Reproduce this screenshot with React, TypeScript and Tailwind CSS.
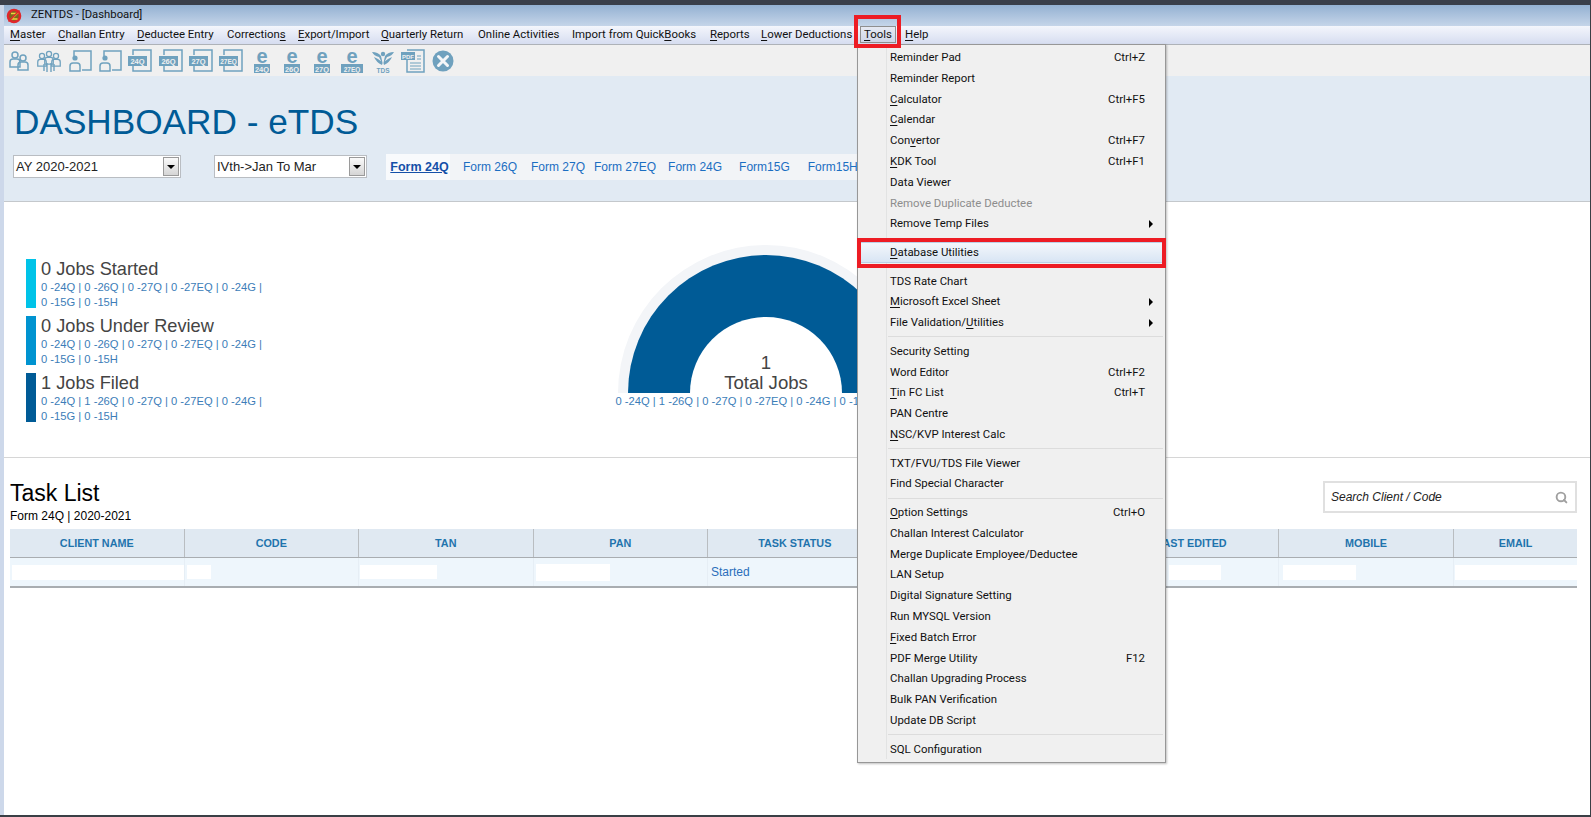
import React from 'react';
import { Search } from 'lucide-react';

const ICON = '#6fa1be';

const menuBar: { label: string; u: number; cls: string; active?: boolean }[] = [
  { label: 'Master', u: 0, cls: 'w-[48px]' },
  { label: 'Challan Entry', u: 0, cls: 'w-[79px]' },
  { label: 'Deductee Entry', u: 0, cls: 'w-[90px]' },
  { label: 'Corrections', u: 10, cls: 'w-[71px]' },
  { label: 'Export/Import', u: 0, cls: 'w-[83px]' },
  { label: 'Quarterly Return', u: 0, cls: 'w-[97px]' },
  { label: 'Online Activities', u: -1, cls: 'w-[94px]' },
  { label: 'Import from QuickBooks', u: 17, cls: 'w-[138px]' },
  { label: 'Reports', u: 0, cls: 'w-[51px]' },
  { label: 'Lower Deductions', u: 0, cls: 'w-[100px]' },
  { label: 'Tools', u: 0, cls: 'w-[44px]', active: true },
  { label: 'Help', u: 0, cls: 'w-[40px]' },
];

type MenuRow = { label: string; u?: number; key?: string; sub?: boolean; off?: boolean; hot?: boolean } | 'sep';

const toolsMenu: MenuRow[] = [
  { label: 'Reminder Pad', key: 'Ctrl+Z' },
  { label: 'Reminder Report' },
  { label: 'Calculator', u: 0, key: 'Ctrl+F5' },
  { label: 'Calendar', u: 0 },
  { label: 'Convertor', u: 3, key: 'Ctrl+F7' },
  { label: 'KDK Tool', u: 0, key: 'Ctrl+F1' },
  { label: 'Data Viewer' },
  { label: 'Remove Duplicate Deductee', off: true },
  { label: 'Remove Temp Files', sub: true },
  'sep',
  { label: 'Database Utilities', u: 0, hot: true },
  'sep',
  { label: 'TDS Rate Chart' },
  { label: 'Microsoft Excel Sheet', u: 0, sub: true },
  { label: 'File Validation/Utilities', u: 16, sub: true },
  'sep',
  { label: 'Security Setting' },
  { label: 'Word Editor', key: 'Ctrl+F2' },
  { label: 'Tin FC List', u: 0, key: 'Ctrl+T' },
  { label: 'PAN Centre' },
  { label: 'NSC/KVP Interest Calc', u: 0 },
  'sep',
  { label: 'TXT/FVU/TDS File Viewer' },
  { label: 'Find Special Character' },
  'sep',
  { label: 'Option Settings', u: 0, key: 'Ctrl+O' },
  { label: 'Challan Interest Calculator' },
  { label: 'Merge Duplicate Employee/Deductee' },
  { label: 'LAN Setup' },
  { label: 'Digital Signature Setting' },
  { label: 'Run MYSQL Version' },
  { label: 'Fixed Batch Error', u: 0 },
  { label: 'PDF Merge Utility', key: 'F12' },
  { label: 'Challan Upgrading Process' },
  { label: 'Bulk PAN Verification' },
  { label: 'Update DB Script' },
  'sep',
  { label: 'SQL Configuration' },
];

const tabs = [
  { label: 'Form 26Q', cls: 'ml-[13px]' },
  { label: 'Form 27Q', cls: 'ml-[14px]' },
  { label: 'Form 27EQ', cls: 'ml-[9px]' },
  { label: 'Form 24G', cls: 'ml-[12px]' },
  { label: 'Form15G', cls: 'ml-[17px]' },
  { label: 'Form15H', cls: 'ml-[18px]' },
];

const jobs = [
  { title: '0 Jobs Started', bar: 'bg-[#00c3e8]', first: '0 -24Q | 0 -26Q | 0 -27Q | 0 -27EQ | 0 -24G |' },
  { title: '0 Jobs Under Review', bar: 'bg-[#0093d0]', first: '0 -24Q | 0 -26Q | 0 -27Q | 0 -27EQ | 0 -24G |' },
  { title: '1 Jobs Filed', bar: 'bg-[#005b96]', first: '0 -24Q | 1 -26Q | 0 -27Q | 0 -27EQ | 0 -24G |' },
];

const columns = ['CLIENT NAME', 'CODE', 'TAN', 'PAN', 'TASK STATUS', '', 'LAST EDITED', 'MOBILE', 'EMAIL'];

const Mnemonic = ({ label, u }: { label: string; u?: number }) => {
  if (u === undefined || u < 0) return <>{label}</>;
  return (
    <>
      {label.slice(0, u)}
      <span className="underline underline-offset-2">{label[u]}</span>
      {label.slice(u + 1)}
    </>
  );
};

// toolbar drawings
const Person = ({ x, y, s = 1 }: { x: number; y: number; s?: number }) => (
  <g transform={`translate(${x} ${y}) scale(${s})`} fill="none" stroke={ICON} strokeWidth="1.5">
    <circle cx="0" cy="0" r="3" />
    <path d="M-5 12 v-5 q0 -3 3 -3 h4 q3 0 3 3 v5 z" />
  </g>
);

const Svg = ({ children }: { children: React.ReactNode }) => (
  <svg width="26" height="24" viewBox="0 0 26 24" className="shrink-0 overflow-visible">
    {children}
  </svg>
);

const TwoPeople = () => (
  <Svg>
    <Person x={9} y={6} />
    <Person x={17} y={9} />
  </Svg>
);

const Crowd = () => (
  <Svg>
    <Person x={6} y={7} s={0.85} />
    <Person x={20} y={7} s={0.85} />
    <Person x={13} y={5} s={0.85} />
    <path d="M8 22 V15 M11 23 V14 M15 23 V14 M18 22 V15" stroke={ICON} strokeWidth="1.4" />
  </Svg>
);

const PersonCard = () => (
  <Svg>
    <path d="M7 7 V2 H24 V21 H15" fill="none" stroke={ICON} strokeWidth="1.5" />
    <circle cx="8" cy="9" r="2.6" fill={ICON} />
    <path d="M3 22 v-5 q0 -3 3 -3 h4 q3 0 3 3 v5 z" fill="none" stroke={ICON} strokeWidth="1.5" />
  </Svg>
);

const FormIcon = ({ t }: { t: string }) => (
  <Svg>
    <path d="M6 6 V1 H24 V22 H6 V17" fill="none" stroke={ICON} strokeWidth="1.5" />
    <rect x="1" y="7" width="19" height="10" fill={ICON} />
    <text x="10.5" y="15" textAnchor="middle" fontSize={t.length > 3 ? 6.5 : 7.5} fontWeight="700" fill="#f0f0f0" fontFamily="'Liberation Sans', sans-serif">
      {t}
    </text>
  </Svg>
);

const EFormIcon = ({ t }: { t: string }) => (
  <Svg>
    <text x="13" y="13.5" textAnchor="middle" fontSize="20" fontWeight="700" fill={ICON} fontFamily="'Liberation Sans', sans-serif">
      e
    </text>
    <rect x={t.length > 3 ? 2 : 5} y="15" width={t.length > 3 ? 22 : 16} height="9" fill={ICON} />
    <text x="13" y="22.5" textAnchor="middle" fontSize={t.length > 3 ? 6.5 : 7.5} fontWeight="700" fill="#f0f0f0" fontFamily="'Liberation Sans', sans-serif">
      {t}
    </text>
  </Svg>
);

const TdsIcon = () => (
  <Svg>
    <circle cx="13" cy="5" r="2.2" fill={ICON} />
    <path d="M13 16 L9 8 Q4 7 2 3 Q8 3 11 7 Z M13 16 L17 8 Q22 7 24 3 Q18 3 15 7 Z M12 16 Q6 13 4 8 Q9 10 12 13 Z M14 16 Q20 13 22 8 Q17 10 14 13 Z" fill={ICON} />
    <text x="13" y="23.5" textAnchor="middle" fontSize="6.5" fontWeight="700" fill={ICON} fontFamily="'Liberation Sans', sans-serif">
      TDS
    </text>
  </Svg>
);

const PdfIcon = () => (
  <Svg>
    <path d="M7 1 H24 V23 H7 V11" fill="none" stroke={ICON} strokeWidth="1.5" />
    <rect x="1" y="3" width="14" height="8" fill={ICON} />
    <text x="8" y="9.5" textAnchor="middle" fontSize="6" fontWeight="700" fill="#f0f0f0" fontFamily="'Liberation Sans', sans-serif">
      PDF
    </text>
    <path d="M10 14 H21 M10 17 H21 M10 20 H21 M17 7 H21 M17 10 H21" stroke={ICON} strokeWidth="1.2" />
  </Svg>
);

const CloseIcon = () => (
  <Svg>
    <circle cx="13" cy="12" r="10.5" fill={ICON} />
    <path d="M8.5 7.5 L17.5 16.5 M17.5 7.5 L8.5 16.5" stroke="#f4f6f8" strokeWidth="3" strokeLinecap="round" />
  </Svg>
);

const toolbar = [
  <TwoPeople />,
  <Crowd />,
  <PersonCard />,
  <PersonCard />,
  <FormIcon t="24Q" />,
  <FormIcon t="26Q" />,
  <FormIcon t="27Q" />,
  <FormIcon t="27EQ" />,
  <EFormIcon t="24Q" />,
  <EFormIcon t="26Q" />,
  <EFormIcon t="27Q" />,
  <EFormIcon t="27EQ" />,
  <TdsIcon />,
  <PdfIcon />,
  <CloseIcon />,
];

const AppLogo = () => (
  <svg width="16" height="16" viewBox="0 0 16 16" className="shrink-0">
    <circle cx="8" cy="8" r="6" fill="#7a6a1c" stroke="#e0262a" strokeWidth="2.6" />
    <path d="M5 5.5 H11 L5.5 11 H11.5" fill="none" stroke="#f1d33c" strokeWidth="1.6" />
    <path d="M2.5 13.5 L13.5 2.5" stroke="#e0262a" strokeWidth="1.6" />
  </svg>
);

const FakeSelect = ({ value, className }: { value: string; className: string }) => (
  <div className={`flex h-[23px] items-center border border-[#b9bdc2] bg-white pl-[2px] pr-[1px] text-[13px] text-[#222] ${className}`}>
    <span className="flex-1">{value}</span>
    <div className="flex h-[19px] w-[16px] items-center justify-center border border-[#9a9a9a] bg-gradient-to-b from-[#fafafa] to-[#d5d5d5]">
      <div className="h-0 w-0 border-x-[4px] border-t-[4px] border-x-transparent border-t-black" />
    </div>
  </div>
);

const Gauge = () => (
  <svg width="300" height="150" viewBox="0 0 300 150" className="block">
    <path d="M2 149 A148 148 0 0 1 298 149 Z" fill="#f3f5f8" />
    <path d="M12 149 A138 138 0 0 1 288 149 Z" fill="#005b96" />
    <path d="M74 149 A76 76 0 0 1 226 149 Z" fill="#ffffff" />
  </svg>
);

const ToolsDropdown = () => (
  <div className="absolute left-[857px] top-[44px] z-10 w-[309px] border border-[#979797] bg-[#f0f0f0] p-[2px] font-['Roboto',sans-serif] text-[11.4px] text-[#111] shadow-[1px_1px_2px_rgba(0,0,0,0.25)]">
    <div className="absolute bottom-[3px] left-[28px] top-[3px] w-px bg-[#e2e3e3]" />
    {toolsMenu.map((row, i) =>
      row === 'sep' ? (
        <div key={i} className="flex h-[7.7px] items-center pl-[28px]">
          <div className="h-px w-full bg-[#dcdcdc]" />
        </div>
      ) : (
        <div
          key={i}
          className={`relative flex h-[20.83px] items-center ${row.off ? 'text-[#8d8d8d]' : ''} ${
            row.hot ? 'border border-[#bcd0e6] bg-gradient-to-b from-[#f4f7fb] to-[#d8e5f4] pl-[29px]' : 'pl-[30px]'
          }`}
        >
          <span className="flex-1 whitespace-nowrap">
            <Mnemonic label={row.label} u={row.u} />
          </span>
          {row.key && <span className="absolute right-[18px]">{row.key}</span>}
          {row.sub && <div className="absolute right-[10px] h-0 w-0 border-y-[4px] border-l-[4px] border-y-transparent border-l-black" />}
        </div>
      )
    )}
  </div>
);

export default function App() {
  return (
    <div className="relative flex h-[817px] w-[1591px] flex-col overflow-hidden bg-[#3a3f45] font-['Liberation_Sans',Arial,sans-serif]">
      <div className="h-[5px] shrink-0 bg-[#3a3f4a]" />
      <div className="flex min-h-0 flex-1 pr-px pb-[2px]">
        <div className="w-[4px] shrink-0 bg-[#cdd8ea]" />
        <div className="flex min-w-0 flex-1 flex-col bg-white">
          {/* title bar */}
          <div className="flex h-[21px] shrink-0 items-center gap-[9px] bg-gradient-to-b from-[#94b1d2] to-[#c5d5e9] pl-[2px] font-['Roboto',sans-serif] text-[11.3px] text-[#111]">
            <AppLogo />
            <span>ZENTDS - [Dashboard]</span>
          </div>

          {/* menu bar */}
          <div className="flex h-[19px] shrink-0 items-center border-b border-[#aeb2b8] bg-gradient-to-b from-[#f4f6fc] to-[#d6ddf0] pl-[6px] font-['Roboto',sans-serif] text-[11.4px] text-[#111]">
            {menuBar.map((m) => (
              <div key={m.label} className={`shrink-0 whitespace-nowrap ${m.cls}`}>
                <span
                  className={
                    m.active
                      ? 'ml-[-1px] inline-block border border-[#8f8f8f] bg-gradient-to-b from-[#e6e9f2] to-[#cfd6e8] px-[3px] leading-[15px]'
                      : ''
                  }
                >
                  <Mnemonic label={m.label} u={m.u} />
                </span>
              </div>
            ))}
          </div>

          {/* toolbar */}
          <div className="flex h-[31px] shrink-0 items-center bg-[#f0f0f0]">
            {toolbar.map((icon, i) => (
              <div key={i} className="flex w-[30.3px] shrink-0 justify-center">
                {icon}
              </div>
            ))}
          </div>

          {/* dashboard header */}
          <div className="h-[126px] shrink-0 border-b border-[#c4c8cc] bg-[#e1eaf3]">
            <h1 className="pl-[10px] pt-[26px] text-[35.2px] leading-[40px] text-[#005b96]">DASHBOARD - eTDS</h1>
            <div className="mt-[12px] flex items-start pl-[9px]">
              <FakeSelect value="AY 2020-2021" className="mt-[1px] w-[168px]" />
              <FakeSelect value="IVth->Jan To Mar" className="ml-[33px] mt-[1px] w-[153px]" />
              <div className="ml-[19px] flex h-[26px] w-[500px] items-center bg-[#f2f4f7] text-[12px] text-[#1b6ec2]">
                <span className="flex h-full w-[64px] items-center justify-center bg-[#f8fafc] pl-[3px] text-[12.5px] font-bold text-[#1450a8] underline">Form 24Q</span>
                {tabs.map((t) => (
                  <span key={t.label} className={t.cls}>
                    {t.label}
                  </span>
                ))}
              </div>
            </div>
          </div>

          {/* job summary */}
          <div className="relative h-[256px] shrink-0 border-b border-[#d6d6d6]">
            <div className="flex flex-col gap-[8px] pl-[22px] pt-[57px]">
              {jobs.map((j) => (
                <div key={j.title} className="flex h-[49px] gap-[5px]">
                  <div className={`w-[10px] ${j.bar}`} />
                  <div className="whitespace-nowrap text-[11.2px] leading-[14.5px] text-[#3c7db8]">
                    <div className="text-[18.2px] leading-[21px] text-[#444]">{j.title}</div>
                    <div>{j.first}</div>
                    <div>0 -15G | 0 -15H</div>
                  </div>
                </div>
              ))}
            </div>
            <div className="absolute left-[460px] top-[42px] flex w-[604px] flex-col items-center">
              <Gauge />
              <div className="absolute top-[109px] text-center text-[18.6px] leading-[20px] text-[#444]">
                <div>1</div>
                <div>Total Jobs</div>
              </div>
              <div className="whitespace-nowrap text-[11.2px] leading-[14px] text-[#3c7db8]">
                0 -24Q | 1 -26Q | 0 -27Q | 0 -27EQ | 0 -24G | 0 -15G | 0 -15H
              </div>
            </div>
          </div>

          {/* task list */}
          <div className="flex flex-col px-[6px]">
            <div className="flex h-[71px] items-end justify-between pb-[5px]">
              <div className="text-black">
                <div className="mb-[2px] text-[23px] leading-[26px]">Task List</div>
                <div className="text-[12px] leading-[16px]">Form 24Q | 2020-2021</div>
              </div>
              <div className="mb-[11px] mr-[7px] flex h-[32px] w-[254px] items-center justify-between border-2 border-[#e0e0e0] bg-white pl-[6px] pr-[7px] text-[12px] italic text-[#222]">
                Search Client / Code
                <Search size={13} strokeWidth={3.5} className="text-[#a0a0a0]" />
              </div>
            </div>
            <div className="grid h-[29px] w-[1567px] grid-cols-[174.5px_174.5px_174.5px_174.5px_174.5px_222px_174.5px_175px_123px] border-b border-[#a9adb1] bg-[#e0e9f2]">
              {columns.map((c, i) => (
                <div key={i} className="flex items-center justify-center border-r border-[#b9bdc1] text-[10.8px] font-bold text-[#1f74ad] last:border-r-0">
                  {c}
                </div>
              ))}
            </div>
            <div className="grid h-[30px] w-[1567px] grid-cols-[174.5px_174.5px_174.5px_174.5px_174.5px_222px_174.5px_175px_123px] border-b-2 border-[#a9adb1] bg-[#eef6fc] text-[12px] text-[#2a6ebb]">
              <div className="flex items-center border-r border-[#e6eef5] pl-[2px]">
                <div className="h-[15px] w-[172px] bg-white" />
              </div>
              <div className="flex items-center border-r border-[#e6eef5] pl-[2px]">
                <div className="h-[14px] w-[24px] bg-white" />
              </div>
              <div className="flex items-center border-r border-[#e6eef5] pl-[1px]">
                <div className="h-[14px] w-[77px] bg-white" />
              </div>
              <div className="flex items-center border-r border-[#e6eef5] pl-[2px]">
                <div className="h-[17px] w-[74px] bg-white" />
              </div>
              <div className="flex items-center border-r border-[#e6eef5] pl-[3px]">Started</div>
              <div />
              <div className="flex items-center justify-end border-r border-[#e6eef5] pr-[57px]">
                <div className="h-[15px] w-[52px] bg-white" />
              </div>
              <div className="flex items-center border-r border-[#e6eef5] pl-[4px]">
                <div className="h-[15px] w-[73px] bg-white" />
              </div>
              <div className="flex items-center pl-px">
                <div className="h-[15px] w-full bg-white" />
              </div>
            </div>
          </div>
        </div>
      </div>

      <ToolsDropdown />

      {/* red callouts */}
      <div className="pointer-events-none absolute left-[854px] top-[15px] z-20 h-[33px] w-[47px] border-[4px] border-[#ed1c24]" />
      <div className="pointer-events-none absolute left-[857px] top-[238px] z-20 h-[30px] w-[309px] border-[4px] border-[#ed1c24]" />
    </div>
  );
}
